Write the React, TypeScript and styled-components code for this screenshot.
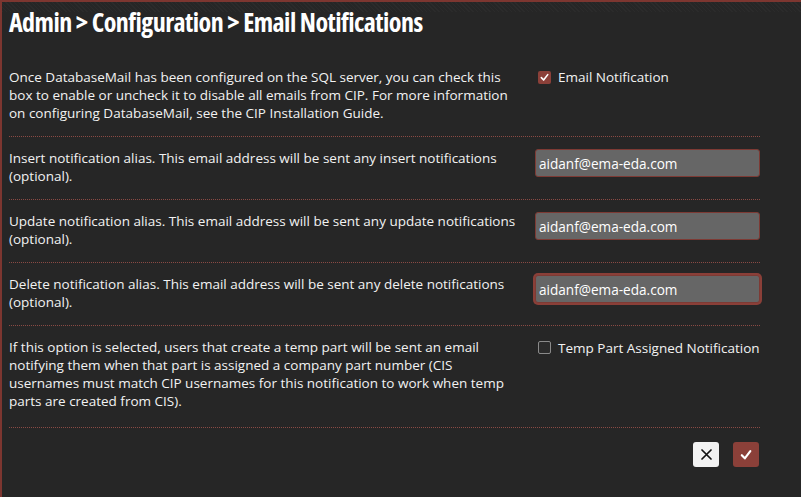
import styled, { createGlobalStyle, css } from "styled-components"

const GlobalStyle = createGlobalStyle`
  html, body {
    margin: 0;
    padding: 0;
    background: #262626;
  }
  * { box-sizing: border-box; }
`

const Page = styled.div`
  min-height: 100vh;
  background: #262626;
  border-top: 2px solid #7d3630;
  border-left: 2px solid #7d3630;
  padding: 0 41px 0 7px;
  font-family: "Open Sans", "Noto Sans", sans-serif;
  font-size: 13.5px;
  line-height: 18px;
  color: #f2f2f2;
`

const Header = styled.div`
  margin: 0 -41px 0 -7px;
  padding: 3px 41px 16px 7px;
  background:
    repeating-linear-gradient(45deg, rgba(255,255,255,0.025) 0 1px, transparent 1px 3px) top / 100% 10px no-repeat;
`

const Title = styled.h1`
  margin: 0;
  font-family: "Open Sans", "DejaVu Sans Condensed", sans-serif;
  font-stretch: 75%;
  font-weight: 700;
  font-size: 26px;
  line-height: 35px;
  color: #ffffff;
  letter-spacing: -0.55px;
`

const Row = styled.div<{ $last?: boolean }>`
  display: grid;
  grid-template-columns: 1fr 225px;
  column-gap: 15px;
  padding: 12px 0 ${p => (p.$last ? "17px" : "14px")};
  border-bottom: 1px dotted #8a4a44;
`

const Description = styled.p`
  margin: 0;
`

const CheckLabel = styled.label<{ $offset?: number }>`
  display: flex;
  align-items: center;
  gap: 7px;
  padding: ${p => p.$offset ?? 2}px 0 0 3px;
  font-size: 13.5px;
  line-height: 16px;
  height: 16px;
  white-space: nowrap;
`

const Box = styled.span<{ $checked?: boolean }>`
  width: 13px;
  height: 13px;
  border-radius: 2px;
  display: inline-flex;
  align-items: center;
  justify-content: center;
  flex: none;
  color: #ffffff;
  ${p => p.$checked
    ? css`background: #8b4039;`
    : css`background: #2b2b2b; border: 1px solid #8a8a8a;`}
`

const TextInput = styled.input<{ $focused?: boolean }>`
  width: 225px;
  height: 28px;
  background: #666666;
  border: 1px solid #7d3a34;
  border-radius: 3px;
  padding: 0 3px;
  color: #ffffff;
  font-family: "Open Sans", "Noto Sans", sans-serif;
  font-size: 13.6px;
  outline: none;
  ${p => p.$focused && css`
    box-shadow: 0 0 0 2px #8a3f38;
  `}
`

const Actions = styled.div`
  display: flex;
  justify-content: flex-end;
  gap: 14px;
  padding: 14px 1px 0 0;
`

const IconButton = styled.button<{ $primary?: boolean }>`
  width: 26px;
  height: 25px;
  border: none;
  border-radius: 3px;
  padding: 0;
  display: flex;
  align-items: center;
  justify-content: center;
  cursor: pointer;
  background: ${p => (p.$primary ? "#8b4039" : "#f2f2f2")};
  color: ${p => (p.$primary ? "#ffffff" : "#111111")};
`

function Tick({ size = 10 }: { size?: number }) {
  return (
    <svg width={size} height={size} viewBox="0 0 10 10" fill="none">
      <path d="M1.5 5.2 L4 7.8 L8.6 1.8" stroke="currentColor" strokeWidth="1.8" strokeLinecap="round" strokeLinejoin="round" />
    </svg>
  )
}

function Checkbox({ checked, label, offset }: { checked?: boolean; label: string; offset?: number }) {
  return (
    <CheckLabel $offset={offset}>
      <Box $checked={checked}>{checked && <Tick size={9} />}</Box>
      {label}
    </CheckLabel>
  )
}

const aliases = [
  { kind: "insert", focused: false },
  { kind: "update", focused: false },
  { kind: "delete", focused: true },
]

export default function App() {
  return (
    <>
      <GlobalStyle />
      <Page>
        <Header>
          <Title>Admin &gt; Configuration &gt; Email Notifications</Title>
        </Header>

        <Row>
          <Description>
            Once DatabaseMail has been configured on the SQL server, you can check this box to enable or
            uncheck it to disable all emails from CIP. For more information on configuring DatabaseMail,
            see the CIP Installation Guide.
          </Description>
          <Checkbox checked label="Email Notification" />
        </Row>

        {aliases.map(a => (
          <Row key={a.kind}>
            <Description>
              {a.kind[0].toUpperCase() + a.kind.slice(1)} notification alias. This email address will be
              sent any {a.kind} notifications (optional).
            </Description>
            <TextInput $focused={a.focused} defaultValue="aidanf@ema-eda.com" />
          </Row>
        ))}

        <Row $last>
          <Description>
            If this option is selected, users that create a temp part will be sent an email notifying them
            when that part is assigned a company part number (CIS usernames must match CIP usernames for
            this notification to work when temp parts are created from CIS).
          </Description>
          <Checkbox label="Temp Part Assigned Notification" offset={3} />
        </Row>

        <Actions>
          <IconButton aria-label="Cancel">
            <svg width="11" height="11" viewBox="0 0 11 11">
              <path d="M1 1 L10 10 M10 1 L1 10" stroke="currentColor" strokeWidth="1.7" strokeLinecap="round" />
            </svg>
          </IconButton>
          <IconButton $primary aria-label="Save">
            <Tick size={12} />
          </IconButton>
        </Actions>
      </Page>
    </>
  )
}
